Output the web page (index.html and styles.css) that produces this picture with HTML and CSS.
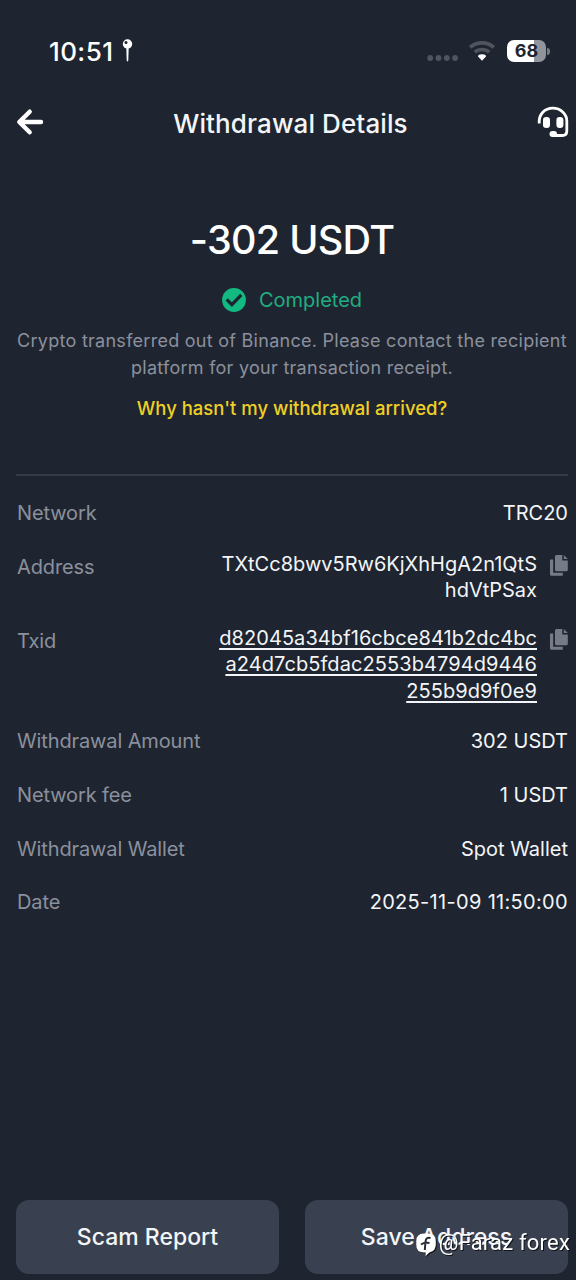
FILE: index.html
```html
<!DOCTYPE html>
<html lang="en">
<head>
<meta charset="utf-8">
<title>Withdrawal Details</title>
<link rel="stylesheet" href="styles.css">
</head>
<body>
<div class="screen">
  <div class="status">
    <span class="time">10:51</span>
    <svg class="pin" width="11" height="24" viewBox="0 0 11 24"><path d="M4.300 8h2.400l-.4 13.500q-.8 1.800-1.600 0z" fill="#fff"/><circle cx="5.500" cy="5" r="4.700" fill="#fff"/><circle cx="4" cy="3.500" r="1.500" fill="#1f2530"/></svg>
    <svg class="signal" width="32" height="8" viewBox="0 0 32 8" fill="#50545e"><circle cx="3.200" cy="4" r="2.900"/><circle cx="11.500" cy="4" r="2.900"/><circle cx="19.800" cy="4" r="2.900"/><circle cx="28.100" cy="4" r="2.900"/></svg>
    <svg class="wifi" width="28" height="22" viewBox="0 0 28 22" fill="none"><path d="M2.200 7.400a17.500 17.500 0 0 1 23.600 0" stroke="#50545e" stroke-width="3.800"/><path d="M6.800 12.200a10.800 10.800 0 0 1 14.400 0" stroke="#50545e" stroke-width="3.600"/><path d="M14 20.800l-4-4.200q0-2.400 4-2.400t4 2.400z" fill="#fff"/></svg>
    <div class="battery"><span class="level">68</span><i class="cap"></i></div>
  </div>
  <header class="header">
    <svg class="back" width="28" height="28" viewBox="0 0 28 28" fill="none" stroke="#fff" stroke-width="4.400" stroke-linecap="round" stroke-linejoin="round"><path d="M13.700 3.700L3.300 14l10.400 10.300M4 14h21"/></svg>
    <h1 class="title">Withdrawal Details</h1>
    <svg class="support" width="32" height="32" viewBox="0 0 32 32" fill="none"><path d="M2.200 17.500C1.500 8 8 2.200 15.800 2.200S29.800 8 29.800 15v10q0 4.500-4.500 4.500H15" stroke="#fff" stroke-width="2.800"/><rect x="6" y="11" width="7" height="11" rx="3.200" fill="#fff"/><rect x="19.400" y="11" width="7" height="11" rx="3.200" fill="#fff"/><rect x="12.500" y="25" width="7.500" height="6" rx="3" fill="#fff"/></svg>
  </header>
  <section class="summary">
    <div class="amount">-302 USDT</div>
    <div class="state">
      <svg width="24" height="24" viewBox="0 0 24 24" fill="none"><circle cx="12" cy="12" r="11.900" fill="#12b981"/><path d="M4.700 11.300l5.200 5.400L19.300 6.800" stroke="#1f2530" stroke-width="3.200"/></svg>
      <span>Completed</span>
    </div>
    <p class="note">Crypto transferred out of Binance. Please contact the recipient<br>platform for your transaction receipt.</p>
    <a class="help">Why hasn't my withdrawal arrived?</a>
  </section>
  <dl class="details">
    <div class="row"><dt>Network</dt><dd>TRC20</dd></div>
    <div class="row multi"><dt>Address</dt><dd>TXtCc8bwv5Rw6KjXhHgA2n1QtS<br>hdVtPSax</dd>
      <svg class="copy" width="18" height="22" viewBox="0 0 18 22" fill="#777b88"><path d="M0 4.500h3.200v13.300h9.600v3H1.500q-1.500 0-1.500-1.500z"/><path d="M5 1.500Q5 0 6.500 0h5.800v5.400h5.500v9.400q0 1.500-1.500 1.500H6.500q-1.500 0-1.500-1.500z"/><path d="M13.800 0l4 4h-4z"/></svg></div>
    <div class="row multi"><dt>Txid</dt><dd class="hash">d82045a34bf16cbce841b2dc4bc<br>a24d7cb5fdac2553b4794d9446<br>255b9d9f0e9</dd>
      <svg class="copy" width="18" height="22" viewBox="0 0 18 22" fill="#777b88"><path d="M0 4.500h3.200v13.300h9.600v3H1.500q-1.500 0-1.500-1.500z"/><path d="M5 1.500Q5 0 6.500 0h5.800v5.400h5.500v9.400q0 1.500-1.500 1.500H6.500q-1.500 0-1.500-1.500z"/><path d="M13.800 0l4 4h-4z"/></svg></div>
    <div class="row"><dt>Withdrawal Amount</dt><dd>302 USDT</dd></div>
    <div class="row"><dt>Network fee</dt><dd>1 USDT</dd></div>
    <div class="row"><dt>Withdrawal Wallet</dt><dd>Spot Wallet</dd></div>
    <div class="row"><dt>Date</dt><dd class="date">2025-11-09 11:50:00</dd></div>
  </dl>
  <footer class="actions">
    <button class="action">Scam Report</button>
    <button class="action">Save Address</button>
  </footer>
  <div class="watermark">
    <svg width="20" height="24" viewBox="0 0 20 24"><path d="M8 .5h4.500Q19.800.5 19.800 8v3.500q0 6.500-6 7.800L9.500 23l.3-3.500H8Q.3 19.500.3 12V8Q.3.500 8 .5z" fill="#fff"/><path d="M14.500 5q-4.500-1.300-5 3.500L8.800 17M5 11.500q3-2.200 8.500-1.500" stroke="#252b36" stroke-width="2" fill="none"/></svg>
    <span class="handle">@Faraz forex</span>
  </div>
</div>
</body>
</html>
```
FILE: styles.css
```css
* { box-sizing: border-box; }
body { margin: 0; background: #1f2530; font-family: Inter, "Liberation Sans", sans-serif; color: #f3f5f8; }
.screen { position: relative; height: 1280px; display: flex; flex-direction: column; overflow: hidden; }
.status { display: flex; align-items: center; height: 101px; padding: 0 26px 0 49px; color: #fff; }
.time { margin-top: 2px; font-size: 26px; font-weight: 550; line-height: 30px; letter-spacing: .4px; }
.pin { margin-left: 9px; }
.signal { margin: 14px 9px 0 auto; }
.wifi { margin-right: 11px; }
.battery { position: relative; width: 39px; height: 22px; border-radius: 7px; background: linear-gradient(90deg, #fff 68%, #92949b 68%); margin-right: 4px; text-align: center; color: #1f2530; }
.level { font-size: 18px; line-height: 22px; font-weight: 650; }
.cap { position: absolute; right: -4px; top: 8px; width: 3px; height: 7px; border-radius: 0 3px 3px 0; background: #777b83; }
.header { display: flex; align-items: center; justify-content: space-between; height: 42px; padding: 0 7px 0 16px; }
.title { margin: 3px 0 0; font-size: 26px; line-height: 32px; font-weight: 550; letter-spacing: .1px; }
.summary { margin: 0 8px 0 16px; height: 333px; padding-top: 70px; display: flex; flex-direction: column; align-items: center; border-bottom: 2px solid #343b48; }
.amount { font-size: 39.500px; line-height: 54px; font-weight: 550; color: #fff; letter-spacing: -.7px; }
.state { display: flex; align-items: center; gap: 13px; margin-top: 19px; height: 28px; font-size: 20px; color: #1fae80; }
.note { margin: 14px 0 0; font-size: 18px; line-height: 26.800px; text-align: center; white-space: nowrap; color: #8b909d; letter-spacing: .27px; }
.help { margin-top: 13px; font-size: 18.500px; line-height: 27px; color: #efcf26; font-weight: 500; }
.details { margin: 24px 8px 0 17px; display: flex; flex-direction: column; gap: 26.800px; font-size: 20px; line-height: 26.800px; }
.row { display: flex; }
.row dt { color: #8b909d; letter-spacing: -.12px; }
.row dd { margin: 0 0 0 auto; text-align: right; }
.multi { margin: -3px 0 -3.400px; }
.multi dt { margin-top: 3px; }
.hash { text-decoration: underline; text-decoration-thickness: 2px; text-underline-offset: 3px; letter-spacing: .08px; }
.row .date { letter-spacing: .32px; }
.copy { margin: 4px 0 0 13px; }
.actions { display: grid; grid-template-columns: 1fr 1fr; gap: 26px; margin: auto 8px 6px 16px; }
.action { height: 74px; border: 0; border-radius: 13px; background: #394150; color: #f3f5f8; padding: 0; font: 500 23px/30px Inter, "Liberation Sans", sans-serif; }
.watermark { position: absolute; right: 6px; bottom: 22px; display: flex; align-items: center; gap: 3px; color: #fff; filter: drop-shadow(1.500px 1.500px 0 #101216); }
.watermark svg { margin-top: 4px; }
.handle { font: 400 22px/30px Roboto, sans-serif; letter-spacing: .2px; }
```
